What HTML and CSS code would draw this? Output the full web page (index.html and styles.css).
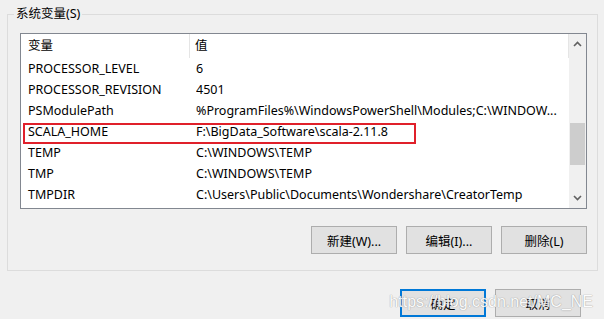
FILE: index.html
```html
<!DOCTYPE html>
<html lang="zh-CN">
<head>
    <meta charset="UTF-8">
    <title>系统变量</title>
    <link rel="stylesheet" href="styles.css">
</head>
<body>
    <div class="window">
        <fieldset class="group">
            <legend>系统变量(S)</legend>

            <div class="listview">
                <div class="list">
                    <div class="row head">
                        <span class="name">变量</span>
                        <span class="value">值</span>
                    </div>
                    <div class="row"><span class="name">PROCESSOR_LEVEL</span><span class="value">6</span></div>
                    <div class="row"><span class="name">PROCESSOR_REVISION</span><span class="value">4501</span></div>
                    <div class="row"><span class="name">PSModulePath</span><span class="value">%ProgramFiles%\WindowsPowerShell\Modules;C:\WINDOW...</span></div>
                    <div class="row marked"><span class="name">SCALA_HOME</span><span class="value">F:\BigData_Software\scala-2.11.8</span></div>
                    <div class="row"><span class="name">TEMP</span><span class="value">C:\WINDOWS\TEMP</span></div>
                    <div class="row"><span class="name">TMP</span><span class="value">C:\WINDOWS\TEMP</span></div>
                    <div class="row"><span class="name">TMPDIR</span><span class="value">C:\Users\Public\Documents\Wondershare\CreatorTemp</span></div>
                </div>
                <div class="scrollbar">
                    <svg class="arrow" width="9" height="6" viewBox="0 0 9 6"><path d="M1 5 L4.5 1.5 L8 5" fill="none" stroke="#606060" stroke-width="1.6"/></svg>
                    <div class="track"><div class="thumb"></div></div>
                    <svg class="arrow" width="9" height="6" viewBox="0 0 9 6"><path d="M1 1 L4.5 4.5 L8 1" fill="none" stroke="#606060" stroke-width="1.6"/></svg>
                </div>
            </div>

            <div class="actions">
                <button class="btn">新建(W)...</button>
                <button class="btn">编辑(I)...</button>
                <button class="btn">删除(L)</button>
            </div>
        </fieldset>

        <div class="footer">
            <button class="btn default">确定</button>
            <button class="btn">取消</button>
            <span class="watermark">https://blog.csdn.net/MC_NE</span>
        </div>
    </div>
</body>
</html>
```

FILE: styles.css
```css
body {
    margin: 0;
    background-color: #f0f0f0;
    font-family: "Noto Sans", "Noto Sans CJK SC", sans-serif;
    font-size: 12.5px;
    color: #000;
}
.window {
    width: 604px;
    height: 319px;
    overflow: hidden;
}
.group {
    margin: 4px 6px 0 7px;
    padding: 0 10px 16px 12px;
    border: 1px solid #dcdcdc;
    min-width: 0;
}
.group legend {
    margin-left: -6px;
    padding: 0 2px;
    line-height: 20px;
    font-size: 12.5px;
}
.listview {
    display: flex;
    height: 174px;
    margin-top: 9px;
    border: 1px solid #828790;
    background: #fff;
}
.list {
    flex: 1;
    overflow: hidden;
}
.row {
    display: flex;
    align-items: center;
    height: 21px;
    white-space: nowrap;
}
.row .name {
    width: 168px;
    padding-left: 7px;
    flex-shrink: 0;
}
.row .value {
    overflow: hidden;
}
.row.head {
    height: 24px;
}
.row.head .name {
    height: 24px;
    line-height: 24px;
    border-right: 1px solid #e5e5e5;
    width: 161px;
}
.row.head .value {
    flex: 1;
    height: 24px;
    line-height: 24px;
    border-right: 1px solid #e5e5e5;
    padding-left: 5px;
}
.row.marked {
    position: relative;
}
.row.marked::after {
    content: "";
    position: absolute;
    left: 2px;
    top: 2px;
    width: 389px;
    height: 17px;
    border: 2px solid #e0202a;
}
.scrollbar {
    width: 17px;
    display: flex;
    flex-direction: column;
    align-items: center;
    background: #f0f0f0;
}
.scrollbar .arrow {
    margin: 7px 0;
}
.track {
    flex: 1;
    width: 100%;
    padding-top: 69px;
}
.thumb {
    width: 15px;
    height: 42px;
    margin: 0 auto;
    background: #cdcdcd;
}
.actions {
    display: flex;
    justify-content: flex-end;
    gap: 9px;
    margin-top: 17px;
}
.btn {
    width: 86px;
    height: 28px;
    background: #e1e1e1;
    border: 1px solid #adadad;
    font-family: "Noto Sans", "Noto Sans CJK SC", sans-serif;
    font-size: 12.5px;
    color: #000;
    padding: 0;
}
.btn.default {
    border: 2px solid #0078d7;
}
.footer {
    display: flex;
    justify-content: flex-end;
    gap: 9px;
    margin: 18px 23px 0 0;
    position: relative;
}
.watermark {
    position: absolute;
    right: -12px;
    top: 4px;
    font-family: "Liberation Sans", Arial, sans-serif;
    font-size: 16px;
    color: #fff;
    text-shadow: 0 0 1px #9a9a9a, 0 0 1px #9a9a9a;
    opacity: 0.85;
    pointer-events: none;
}
```
